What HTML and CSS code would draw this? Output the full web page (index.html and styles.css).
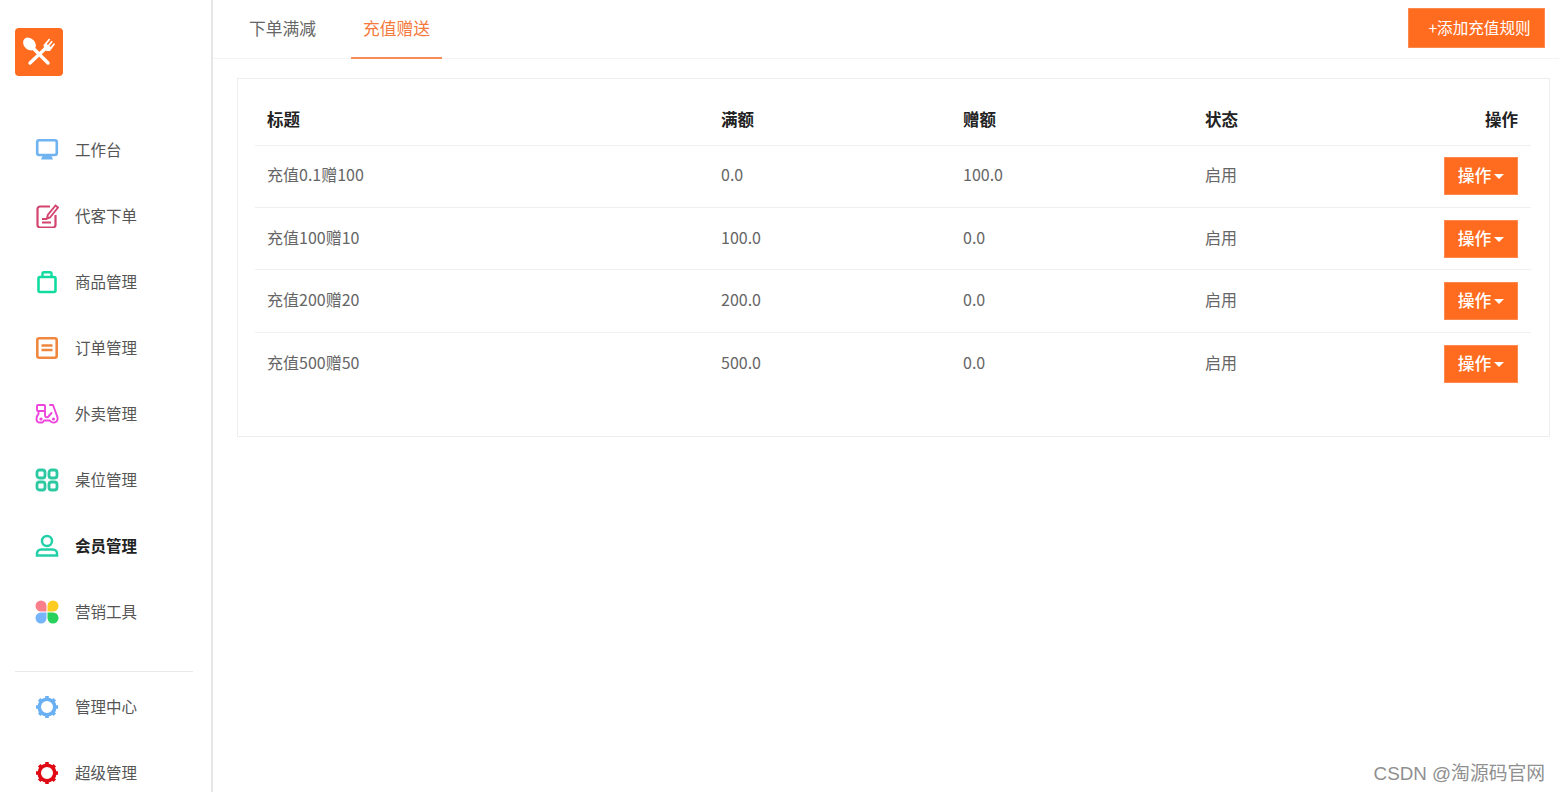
FILE: index.html
```html
<!DOCTYPE html>
<html lang="zh">
<head>
<meta charset="utf-8">
<title>充值赠送</title>
<link rel="stylesheet" href="styles.css">
</head>
<body>
<div class="app">
  <aside class="sidebar">
    <div class="logo">
      <svg viewBox="0 0 48 48" width="48" height="48">
        <path class="logo-line" d="M15 17 L33 35"/>
        <ellipse class="logo-fill" cx="14.500" cy="16" rx="5.500" ry="7.200" transform="rotate(-45 14.500 16)"/>
        <path class="logo-line" d="M32 19 L15 35"/>
        <path class="logo-fill" d="M29 20 L28.500 17 L34 10.500 L35.300 11.500 L31.800 16 L33 17 L36.500 12.700 L37.800 13.800 L34.400 18 L35.500 19 L39 15 L40 16.200 L35 23 L31.500 23 Z"/>
      </svg>
    </div>
    <nav class="nav">
      <a class="nav-item"><svg class="icon" viewBox="0 0 24 24"><rect x="2.200" y="2.200" width="19.600" height="14.800" rx="2" fill="none" stroke="#6fb3f0" stroke-width="2.600"/><path d="M7.500 18h9l1.500 3.500H6z" fill="#6fb3f0"/></svg><span>工作台</span></a>
      <a class="nav-item"><svg class="icon" viewBox="0 0 24 24"><path d="M15 2.500H5a2.500 2.500 0 0 0-2.500 2.500v16A2.500 2.500 0 0 0 5 23.500h13a2.500 2.500 0 0 0 2.500-2.500V11" fill="none" stroke="#d2456f" stroke-width="2.200"/><path d="M12 14.500 L12.800 11 L20.500 1.500 L23 3.500 L15 13.500 Z" fill="none" stroke="#d2456f" stroke-width="1.900"/><path d="M7 15h5M7 18.500h9" stroke="#d2456f" stroke-width="2" fill="none"/></svg><span>代客下单</span></a>
      <a class="nav-item"><svg class="icon" viewBox="0 0 24 24"><rect x="3.500" y="7" width="17" height="15" rx="1.500" fill="none" stroke="#12dba0" stroke-width="2.600"/><path d="M7.500 7V3.600a1.400 1.400 0 0 1 1.400-1.400h6.200a1.400 1.400 0 0 1 1.400 1.400V7" fill="none" stroke="#12dba0" stroke-width="2.400"/></svg><span>商品管理</span></a>
      <a class="nav-item"><svg class="icon" viewBox="0 0 24 24"><rect x="2.300" y="2.300" width="19.400" height="19.400" rx="2" fill="none" stroke="#f0873f" stroke-width="2.600"/><path d="M6.500 9.500h11M6.500 14h11" stroke="#f0873f" stroke-width="2.300"/></svg><span>订单管理</span></a>
      <a class="nav-item"><svg class="icon" viewBox="0 0 24 24"><g fill="none" stroke="#ec45dc" stroke-width="1.900" stroke-linejoin="round" stroke-linecap="round"><rect x="2" y="3" width="8" height="6" rx="1"/><path d="M3.500 9V12Q1.500 14 1.500 17Q1.500 20.500 5 20.500H7.500L9 18.500H14.500L16.500 20Q19 21.500 21.500 19.500Q23.500 17 22 14L18 3H15"/><path d="M10 9V13Q10 16 13 15L16.500 11"/></g><circle cx="6" cy="17" r="1.600" fill="#ec45dc"/><circle cx="18.500" cy="17" r="1.600" fill="#ec45dc"/></svg><span>外卖管理</span></a>
      <a class="nav-item"><svg class="icon" viewBox="0 0 24 24"><g fill="none" stroke="#2dc9a2" stroke-width="2.800"><rect x="2" y="2" width="8" height="8" rx="2.500"/><rect x="14" y="2" width="8" height="8" rx="2.500"/><rect x="2" y="14" width="8" height="8" rx="2.500"/><rect x="14" y="14" width="8" height="8" rx="2.500"/></g></svg><span>桌位管理</span></a>
      <a class="nav-item is-current"><svg class="icon" viewBox="0 0 24 24"><circle cx="12" cy="7" r="5" fill="none" stroke="#24d0a8" stroke-width="2.500"/><path d="M6 15.500h12a4 4 0 0 1 4 4v2H2v-2a4 4 0 0 1 4-4z" fill="none" stroke="#24d0a8" stroke-width="2.500"/></svg><span>会员管理</span></a>
      <a class="nav-item"><svg class="icon" viewBox="0 0 24 24"><path d="M11.500 11.500H6a5.500 5.500 0 1 1 5.500-5.500z" fill="#fb7f8b"/><path d="M12.500 11.500V6A5.500 5.500 0 1 1 18 11.500z" fill="#fdcc22"/><path d="M11.500 12.500V18A5.500 5.500 0 1 1 6 12.500z" fill="#76b5fb"/><path d="M12.500 12.500H18a5.500 5.500 0 1 1-5.500 5.500z" fill="#28d05c"/></svg><span>营销工具</span></a>
    </nav>
    <div class="nav-divider"></div>
    <nav class="nav">
      <a class="nav-item"><svg class="icon" viewBox="0 0 24 24"><circle cx="12" cy="12" r="7.800" fill="none" stroke="#6bb0f2" stroke-width="3.600"/><g stroke="#6bb0f2" stroke-width="3.600"><path d="M12 1v3M12 20v3M1 12h3M20 12h3M4.200 4.200l2.200 2.200M17.600 17.600l2.200 2.200M4.200 19.800l2.200-2.200M17.600 6.400l2.200-2.200"/></g></svg><span>管理中心</span></a>
      <a class="nav-item"><svg class="icon" viewBox="0 0 24 24"><circle cx="12" cy="12" r="7.800" fill="none" stroke="#e00a14" stroke-width="3.600"/><g stroke="#e00a14" stroke-width="3.600"><path d="M12 1v3M12 20v3M1 12h3M20 12h3M4.200 4.200l2.200 2.200M17.600 17.600l2.200 2.200M4.200 19.800l2.200-2.200M17.600 6.400l2.200-2.200"/></g></svg><span>超级管理</span></a>
    </nav>
  </aside>
  <main class="main">
    <header class="topbar">
      <div class="tabs">
        <a class="tab">下单满减</a>
        <a class="tab is-active">充值赠送</a>
      </div>
      <button class="btn btn-add">+添加充值规则</button>
    </header>
    <section class="card">
      <table class="table">
        <colgroup><col class="col-title"><col class="col-num"><col class="col-num"><col class="col-num"><col></colgroup>
        <thead>
          <tr><th>标题</th><th>满额</th><th>赠额</th><th>状态</th><th class="right">操作</th></tr>
        </thead>
        <tbody>
          <tr><td>充值0.1赠100</td><td>0.0</td><td>100.0</td><td>启用</td><td class="right"><button class="btn btn-op">操作<i class="caret"></i></button></td></tr>
          <tr><td>充值100赠10</td><td>100.0</td><td>0.0</td><td>启用</td><td class="right"><button class="btn btn-op">操作<i class="caret"></i></button></td></tr>
          <tr><td>充值200赠20</td><td>200.0</td><td>0.0</td><td>启用</td><td class="right"><button class="btn btn-op">操作<i class="caret"></i></button></td></tr>
          <tr><td>充值500赠50</td><td>500.0</td><td>0.0</td><td>启用</td><td class="right"><button class="btn btn-op">操作<i class="caret"></i></button></td></tr>
        </tbody>
      </table>
    </section>
  </main>
  <div class="watermark">CSDN @淘源码官网</div>
</div>
</body>
</html>
```
FILE: styles.css
```css
* { box-sizing: border-box; }
html, body { margin: 0; height: 100%; overflow: hidden; background: #fff; }
body { font-family: "Noto Sans CJK SC", "Noto Sans", sans-serif; color: #555; font-size: 15.5px; }
.app { display: flex; height: 792px; position: relative; overflow: hidden; }

.sidebar { flex: 0 0 213px; border-right: 2px solid #e6e6e6; padding-top: 28px; height: 100%; overflow: hidden; }
.logo { width: 48px; height: 48px; margin: 0 0 41px 15px; background: #ff6c1f; border-radius: 4px; }
.logo svg { display: block; }
.logo-line { stroke: #fff; stroke-width: 3.400; stroke-linecap: round; fill: none; }
.logo-fill { fill: #fff; }

.nav-item { display: flex; align-items: center; gap: 16px; height: 66px; padding-left: 35px; color: #555; white-space: nowrap; }
.nav-item span { padding-bottom: 2px; }
.nav-item.is-current { color: #222; font-weight: 700; }
.icon { width: 24px; height: 24px; flex: none; }
.nav-divider { height: 1px; background: #e9e9e9; margin: 26px 18px 2px 15px; }

.main { flex: 1; min-width: 0; }
.topbar { display: flex; justify-content: space-between; height: 59px; padding: 0 14px 0 24px; border-bottom: 1px solid #f4f4f4; }
.tabs { display: flex; gap: 23px; }
.tab { display: flex; align-items: center; justify-content: center; width: 91px; height: 59px; font-size: 16.800px; color: #666; padding-bottom: 4px; }
.tab.is-active { color: #f57a3c; border-bottom: 2px solid #f78c58; padding-bottom: 2px; }
.btn { background: #ff6c1f; color: #fff; border: 1px solid #ff8a50; border-radius: 0; font-family: inherit; padding: 0; }
.btn-add { width: 137px; height: 40px; margin-top: 8px; font-size: 15.600px; padding: 0 0 2px 6px; }

.card { margin: 19px 9px 0 24px; height: 359px; border: 1px solid #eeeeee; padding: 16px 18px 0 17px; }
.table { width: 100%; table-layout: fixed; border-collapse: collapse; }
.col-title { width: 454px; }
.col-num { width: 242px; }
.table th, .table td { text-align: left; padding: 0 12px; }
.table th { height: 50px; color: #222; font-weight: 700; font-size: 16.500px; padding-bottom: 2px; }
.table td { height: 62.400px; border-top: 1px solid #f0f0f0; color: #666; font-size: 16px; padding-bottom: 4px; }
.table .right { text-align: right; padding-left: 0; padding-right: 13px; }
.table td.right { padding-bottom: 0; }
.btn-op { display: inline-flex; align-items: center; justify-content: center; gap: 3px; width: 74px; height: 38px; font-size: 16.800px; font-weight: 500; padding-bottom: 2px; vertical-align: middle; }
.caret { width: 0; height: 0; margin-top: 3px; border-left: 5px solid transparent; border-right: 5px solid transparent; border-top: 5px solid #fff; }

.watermark { position: absolute; right: 14px; bottom: 7px; font-family: "Liberation Sans", "Noto Sans CJK SC", sans-serif; font-size: 18.800px; color: #8f8f8f; white-space: nowrap; }
```
